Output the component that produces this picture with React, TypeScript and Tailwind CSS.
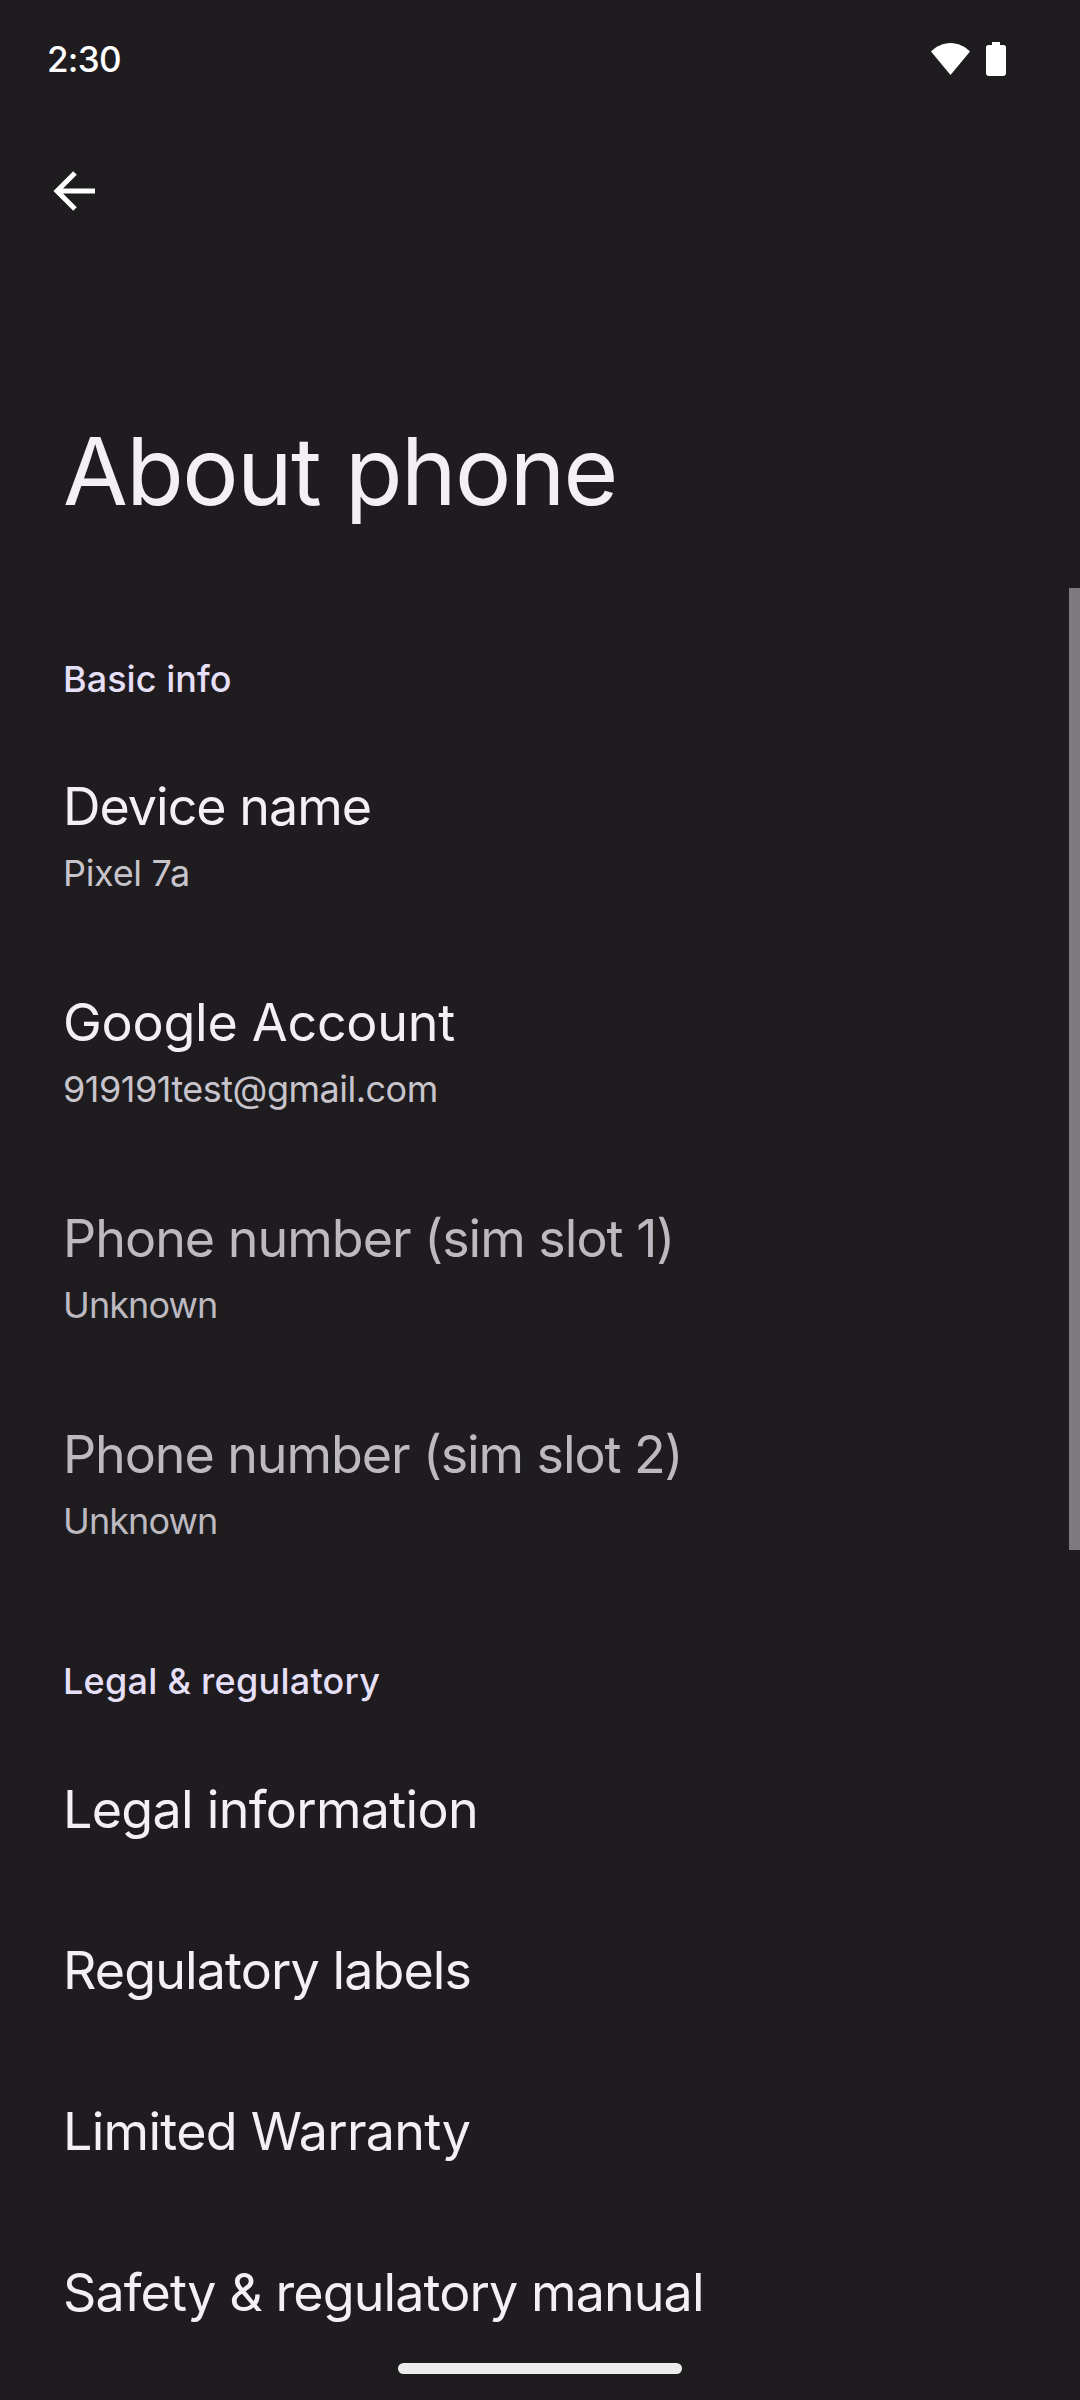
const basicRows = [
  { title: "Device name", sub: "Pixel 7a", titleTracking: "tracking-[-1px]", subTracking: "tracking-[-0.3px]" },
  { title: "Google Account", sub: "919191test@gmail.com", titleTracking: "tracking-[-0.25px]", subTracking: "tracking-[-0.5px]" },
  { title: "Phone number (sim slot 1)", sub: "Unknown", dim: true, titleTracking: "tracking-[-1px]", subTracking: "tracking-[-0.9px]" },
  { title: "Phone number (sim slot 2)", sub: "Unknown", dim: true, titleTracking: "tracking-[-1.1px]", subTracking: "tracking-[-0.9px]" },
];

const legalRows = [
  { title: "Legal information", tracking: "tracking-[-0.7px]" },
  { title: "Regulatory labels", tracking: "tracking-[-0.9px]" },
  { title: "Limited Warranty", tracking: "tracking-[-0.7px]" },
  { title: "Safety & regulatory manual", tracking: "tracking-[-0.9px]" },
];

function SectionLabel({ children, tracking }: { children: string; tracking: string }) {
  return <div className={"h-[44px] pl-[63px] text-[36px] leading-[44px] font-medium text-[#e6dff8] " + tracking}>{children}</div>;
}

export default function App() {
  return (
    <div className="relative h-[2400px] w-[1080px] overflow-hidden bg-[#1e1c1f] font-['Inter',sans-serif]">
      {/* Status bar */}
      <div className="flex h-[116px] items-center justify-between pl-[47px] pr-[74px] pt-[2px]">
        <span className="text-[35px] font-medium tracking-[-0.7px] text-white">2:30</span>
        <div className="flex items-center gap-[16px]">
          <svg width="39" height="32" viewBox="0 0 39 32">
            <path d="M0 8.5C5 3.500 12 0 19.500 0S34 3.500 39 8.500L19.500 32Z" fill="#fff" />
          </svg>
          <svg width="20" height="34" viewBox="0 0 20 34">
            <path d="M6 0h8v3h3.500A2.500 2.500 0 0 1 20 5.500V31a3 3 0 0 1-3 3H3a3 3 0 0 1-3-3V5.500A2.500 2.500 0 0 1 2.500 3H6Z" fill="#fff" />
          </svg>
        </div>
      </div>

      {/* Back arrow */}
      <div className="flex h-[148px] items-center pl-[53px] pt-[2px]">
        <svg width="42" height="40" viewBox="0 0 42 40" fill="none" stroke="#fff" strokeWidth="5">
          <path d="M42 20H4M22 2 4 20l18 18" />
        </svg>
      </div>

      <h1 className="h-[288px] pl-[63px] pt-[150px] text-[94px] leading-[114px] font-normal tracking-[-1.6px] text-[#f4eff4]">About phone</h1>

      <div className="mt-[105px]">
        <SectionLabel tracking="tracking-[0.05px]">Basic info</SectionLabel>
        <div className="mt-[74px]">
          {basicRows.map((row) => (
            <div key={row.title} className="h-[216px] pl-[63px]">
              <div className={"text-[52px] leading-[64px] " + row.titleTracking + " " + (row.dim ? "text-[#bdb9c1]" : "text-[#f4eff4]")}>{row.title}</div>
              <div className={"mt-[12px] text-[36px] leading-[44px] " + row.subTracking + " " + (row.dim ? "text-[#bdb9c1]" : "text-[#c8c4cc]")}>{row.sub}</div>
            </div>
          ))}
        </div>
        <div className="mt-[20px]">
          <SectionLabel tracking="tracking-[0.25px]">Legal &amp; regulatory</SectionLabel>
        </div>
        <div className="mt-[75px]">
          {legalRows.map((row) => (
            <div key={row.title} className={"h-[161px] pl-[63px] text-[52px] leading-[64px] text-[#f4eff4] " + row.tracking}>{row.title}</div>
          ))}
        </div>
      </div>

      {/* Scroll indicator */}
      <div className="absolute right-0 top-[588px] h-[962px] w-[11px] bg-[#7d7a7f]" />

      {/* Gesture handle */}
      <div className="absolute left-[398px] top-[2363px] h-[11px] w-[284px] rounded-full bg-[#ececec]" />
    </div>
  );
}
